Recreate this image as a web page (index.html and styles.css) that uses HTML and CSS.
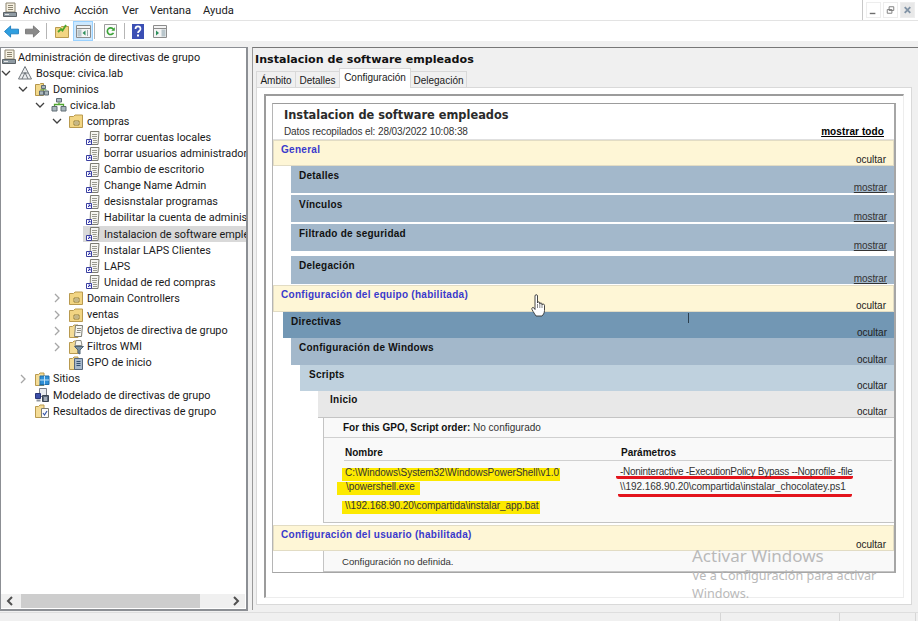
FILE: index.html
```html
<!DOCTYPE html>
<html lang="es">
<head>
    <meta charset="UTF-8">
    <title>Administración de directivas de grupo</title>
    <link rel="stylesheet" href="styles.css">
</head>
<body>

<svg class="defs" width="0" height="0">
    <symbol id="i-root" viewBox="0 0 16 16">
        <path d="M4 1h9v9H4z" fill="#f6f1e2" stroke="#8d8672"/>
        <path d="M6 3.500h5M6 5.500h5M6 7.500h5" stroke="#8d8672"/>
        <path d="M1.500 10.500h13v4h-13z" fill="#8f9ba3" stroke="#5b6267"/>
        <path d="M3 12.500h4" stroke="#e8e8e8"/>
    </symbol>
    <symbol id="i-forest" viewBox="0 0 16 16">
        <path d="M8 1.500l6.500 12.500h-13z" fill="#eceef0" stroke="#70767c"/>
        <path d="M8 7.500l-3 6.500M8 7.500l3 6.500M5 8h6" stroke="#70767c" fill="none"/>
    </symbol>
    <symbol id="i-domains" viewBox="0 0 16 16">
        <path d="M1.500 14.500v-11h4l1-1h3v12z" fill="#f3d98b" stroke="#b5964b"/>
        <path d="M7.500 4.500h4v3h-4zM5.500 10h4v4h-4zM10.500 10h4v4h-4z" fill="#a9b6bc" stroke="#5f6d75"/>
        <path d="M6.500 8.800h6" stroke="#5a9d45"/>
    </symbol>
    <symbol id="i-domain" viewBox="0 0 16 16">
        <path d="M5.500 1.500h5v3.500h-5zM1 9.500h5v4.500h-5zM10 9.500h5v4.500h-5z" fill="#a9b6bc" stroke="#5f6d75"/>
        <path d="M8 5.500v2.500M3.500 9V7.500h9V9" fill="none" stroke="#4fa52f" stroke-width="1.300"/>
    </symbol>
    <symbol id="i-ou" viewBox="0 0 16 16">
        <path d="M1.500 14.500v-11h4l1.500-1.500h7.500v12.500z" fill="#f2d583" stroke="#b99a4f"/>
        <path d="M6 8h5v4h-5z" fill="#fbf2cf" stroke="#8f7a3a"/>
        <path d="M7 10h3" stroke="#8f7a3a"/>
    </symbol>
    <symbol id="i-gpo" viewBox="0 0 16 16">
        <path d="M5.500 1.500h8.500l-1 13h-8z" fill="#f6f6f2" stroke="#7c7c72"/>
        <path d="M7 4.500h5M7 6.500h5M7.500 8.500h4M8 10.500h4M8 12.500h4" stroke="#9a9a90"/>
        <path d="M1.500 9.500h5v5h-5z" fill="#fff" stroke="#3a3f9f"/>
        <path d="M3 13l2-2M3.500 11H5v1.500" fill="none" stroke="#2428b0"/>
    </symbol>
    <symbol id="i-gpofolder" viewBox="0 0 16 16">
        <path d="M1.500 14.500v-11h3l1.500-1.500h4v12.500z" fill="#f4dc97" stroke="#b99a4f"/>
        <path d="M7.500 2.500h7l-1 11h-7z" fill="#f7f7f3" stroke="#7c7c72"/>
        <path d="M9 5.500h4M9 7.500h4M8.500 9.500h4" stroke="#8f8f86"/>
    </symbol>
    <symbol id="i-filter" viewBox="0 0 16 16">
        <path d="M1.500 14.500v-11h3l1.500-1.500h4v12.500z" fill="#f4dc97" stroke="#b99a4f"/>
        <path d="M8 1.500h5l1 5h-7z" fill="#f7f7f3" stroke="#8d8d84"/>
        <path d="M6.500 7.500h9l-3.500 3.500v4l-2-1v-3z" fill="#7d94a6" stroke="#4e6273"/>
    </symbol>
    <symbol id="i-starter" viewBox="0 0 16 16">
        <path d="M1.500 14.500v-11h3l1.500-1.500h4v12.500z" fill="#f4dc97" stroke="#b99a4f"/>
        <path d="M6.500 3.500h8v11h-8z" fill="#a8b9cc" stroke="#56677c"/>
        <path d="M8.500 6.500h4M8.500 8.500h4M8.500 10.500h4" stroke="#34506e"/>
    </symbol>
    <symbol id="i-sites" viewBox="0 0 16 16">
        <path d="M1.500 14.500v-11h3l1.500-1.500h4v12.500z" fill="#f4dc97" stroke="#b99a4f"/>
        <path d="M6 5h9v8.500H6z" fill="#2f8fd6" stroke="#1f6da8"/>
        <path d="M10.500 5v8.500M6 9h9" stroke="#bfe2f7"/>
        <path d="M5 14h5" stroke="#1f6da8"/>
    </symbol>
    <symbol id="i-model" viewBox="0 0 16 16">
        <path d="M5.500 1.500h7v8h-7z" fill="#e9ecf0" stroke="#7a7f88"/>
        <path d="M1.500 6.500h5v5h-5z" fill="#3c4fa8" stroke="#2a3578"/>
        <path d="M8.500 8.500h6v6h-6z" fill="#5d6a7c" stroke="#3a4452"/>
        <path d="M2.500 12.500h4v2h-4z" fill="#8e949c"/>
        <path d="M10 11h3M10 13h3" stroke="#e9ecf0"/>
    </symbol>
    <symbol id="i-results" viewBox="0 0 16 16">
        <path d="M1.500 14.500v-11h3l1.500-1.500h4v12.500z" fill="#f4dc97" stroke="#b99a4f"/>
        <path d="M7.500 5.500h7v9h-7z" fill="#fbfbfb" stroke="#7c7c72"/>
        <path d="M9 10l1.500 2 2.500-4" fill="none" stroke="#3a58a8" stroke-width="1.200"/>
    </symbol>
    <symbol id="i-open" viewBox="0 0 10 10">
        <path d="M1 3l4 4 4-4" fill="none" stroke="#404040" stroke-width="1.300"/>
    </symbol>
    <symbol id="i-closed" viewBox="0 0 10 10">
        <path d="M3 1l4 4-4 4" fill="none" stroke="#a6a6a6" stroke-width="1.300"/>
    </symbol>
</svg>

<header class="menubar">
    <svg class="app-icon"><use href="#i-root"/></svg>
    <nav class="menu">
        <span class="menu-item archivo">Archivo</span>
        <span class="menu-item accion">Acción</span>
        <span class="menu-item ver">Ver</span>
        <span class="menu-item ventana">Ventana</span>
        <span class="menu-item">Ayuda</span>
    </nav>
    <div class="winbtns">
        <span class="winbtn">
            <svg width="14" height="14" viewBox="0 0 14 14"><path d="M3 10h6v1.500H3z" fill="#6d6d6d"/></svg>
        </span>
        <span class="winbtn">
            <svg width="14" height="14" viewBox="0 0 14 14"><path d="M5.500 3.500h5v4h-5zM3.500 6.500h5v4h-5z" fill="#fff" stroke="#7a7a7a"/></svg>
        </span>
        <span class="winbtn close">
            <svg width="14" height="14" viewBox="0 0 14 14"><path d="M4 4l6 6M10 4l-6 6" stroke="#8193a5" stroke-width="2"/></svg>
        </span>
    </div>
</header>

<div class="toolbar">
    <svg class="tool arrow" viewBox="0 0 16 14"><path d="M0.500 7L7 1v3.500h8.500v5H7V13z" fill="#2f9fe0" stroke="#1e7fc0"/></svg>
    <svg class="tool arrow" viewBox="0 0 16 14"><path d="M15.500 7L9 1v3.500H0.500v5H9V13z" fill="#8a8a8a" stroke="#777"/></svg>
    <i class="tool-sep"></i>
    <svg class="tool up" viewBox="0 0 14 14"><path d="M0.500 13.500v-10h5l1-1h7v11z" fill="#f2d583" stroke="#b99a4f"/><path d="M3 8l3-3 1.500 1.500L11 1" fill="none" stroke="#4ba52f" stroke-width="1.800"/></svg>
    <span class="tool-active">
        <svg width="15" height="13" viewBox="0 0 15 13"><path d="M0.500 0.500h14v12h-14z" fill="#f4f4f4" stroke="#8c8c8c"/><path d="M0.500 3.500h14" stroke="#8c8c8c"/><path d="M1.500 4.500h4v7h-4z" fill="#b9c6cc"/><path d="M9.500 5.500L6.500 8l3 2.500z" fill="#2d8f5b"/><path d="M11.500 5v6" stroke="#9aa"/></svg>
    </span>
    <i class="tool-sep"></i>
    <svg class="tool refresh" viewBox="0 0 13 14"><path d="M0.500 0.500h12v13h-12z" fill="#fafafa" stroke="#9c9c9c"/><path d="M9.300 5.200a3.300 3.300 0 1 0 .2 3.600" fill="none" stroke="#3aa236" stroke-width="1.600"/><path d="M10.800 3.200v3.600H7.300z" fill="#3aa236"/></svg>
    <i class="tool-sep"></i>
    <svg class="tool help" viewBox="0 0 12 15"><path d="M0 0h12v15H0z" fill="#3b4fb4"/><path d="M3.500 5c0-3.500 5-3.500 5 0 0 2-2.500 2-2.500 4" fill="none" stroke="#fff" stroke-width="1.700"/><path d="M5 10.500h2v2H5z" fill="#fff"/></svg>
    <svg class="tool panel" viewBox="0 0 14 13"><path d="M0.500 0.500h13v12h-13z" fill="#f4f4f4" stroke="#8c8c8c"/><path d="M0.500 3.500h13" stroke="#8c8c8c"/><path d="M3 5.500L6 8l-3 2.500z" fill="#2d8f5b"/><path d="M8.500 4.500h4v7h-4z" fill="#b9c6cc"/></svg>
</div>

<main class="workspace">
    <aside class="tree">
        <ul class="tree-list">
            <li class="node lv0"><svg class="ico"><use href="#i-root"/></svg><span>Administración de directivas de grupo</span></li>
            <li class="node lv1"><svg class="chev"><use href="#i-open"/></svg><svg class="ico"><use href="#i-forest"/></svg><span>Bosque: civica.lab</span></li>
            <li class="node lv2"><svg class="chev"><use href="#i-open"/></svg><svg class="ico"><use href="#i-domains"/></svg><span>Dominios</span></li>
            <li class="node lv3"><svg class="chev"><use href="#i-open"/></svg><svg class="ico"><use href="#i-domain"/></svg><span>civica.lab</span></li>
            <li class="node lv4"><svg class="chev"><use href="#i-open"/></svg><svg class="ico"><use href="#i-ou"/></svg><span>compras</span></li>
            <li class="node lv5"><svg class="ico"><use href="#i-gpo"/></svg><span>borrar cuentas locales</span></li>
            <li class="node lv5"><svg class="ico"><use href="#i-gpo"/></svg><span>borrar usuarios administradores</span></li>
            <li class="node lv5"><svg class="ico"><use href="#i-gpo"/></svg><span>Cambio de escritorio</span></li>
            <li class="node lv5"><svg class="ico"><use href="#i-gpo"/></svg><span>Change Name Admin</span></li>
            <li class="node lv5"><svg class="ico"><use href="#i-gpo"/></svg><span>desisnstalar programas</span></li>
            <li class="node lv5"><svg class="ico"><use href="#i-gpo"/></svg><span>Habilitar la cuenta de administrador</span></li>
            <li class="node lv5 selected"><svg class="ico"><use href="#i-gpo"/></svg><span>Instalacion de software empleados</span></li>
            <li class="node lv5"><svg class="ico"><use href="#i-gpo"/></svg><span>Instalar LAPS Clientes</span></li>
            <li class="node lv5"><svg class="ico"><use href="#i-gpo"/></svg><span>LAPS</span></li>
            <li class="node lv5"><svg class="ico"><use href="#i-gpo"/></svg><span>Unidad de red compras</span></li>
            <li class="node lv4"><svg class="chev"><use href="#i-closed"/></svg><svg class="ico"><use href="#i-ou"/></svg><span>Domain Controllers</span></li>
            <li class="node lv4"><svg class="chev"><use href="#i-closed"/></svg><svg class="ico"><use href="#i-ou"/></svg><span>ventas</span></li>
            <li class="node lv4"><svg class="chev"><use href="#i-closed"/></svg><svg class="ico"><use href="#i-gpofolder"/></svg><span>Objetos de directiva de grupo</span></li>
            <li class="node lv4"><svg class="chev"><use href="#i-closed"/></svg><svg class="ico"><use href="#i-filter"/></svg><span>Filtros WMI</span></li>
            <li class="node lv5 starter"><svg class="ico"><use href="#i-starter"/></svg><span>GPO de inicio</span></li>
            <li class="node lv2"><svg class="chev"><use href="#i-closed"/></svg><svg class="ico"><use href="#i-sites"/></svg><span>Sitios</span></li>
            <li class="node lv2 no-chev"><svg class="ico"><use href="#i-model"/></svg><span>Modelado de directivas de grupo</span></li>
            <li class="node lv2 no-chev"><svg class="ico"><use href="#i-results"/></svg><span>Resultados de directivas de grupo</span></li>
        </ul>
        <div class="hscroll">
            <svg width="14" height="14" viewBox="0 0 14 14"><path d="M9 3L5 7l4 4" fill="none" stroke="#505050" stroke-width="2"/></svg>
            <div class="hscroll-track"><div class="hscroll-thumb"></div></div>
            <svg width="14" height="14" viewBox="0 0 14 14"><path d="M5 3l4 4-4 4" fill="none" stroke="#505050" stroke-width="2"/></svg>
        </div>
    </aside>

    <section class="pane">
        <h1 class="pane-title">Instalacion de software empleados</h1>
        <div class="tabs">
            <span class="tab tab-ambito">Ámbito</span>
            <span class="tab tab-detalles">Detalles</span>
            <span class="tab active">Configuración</span>
            <span class="tab tab-delegacion">Delegación</span>
        </div>
        <div class="tab-page">
            <div class="frame">
                <div class="report">
                    <div class="report-head">
                        <h2>Instalacion de software empleados</h2>
                        <div class="report-meta">
                            <span>Datos recopilados el: 28/03/2022 10:08:38</span>
                            <a class="show-all">mostrar todo</a>
                        </div>
                    </div>

                    <div class="bar cream h26"><span class="title">General</span><span class="toggle">ocultar</span></div>
                    <div class="bar steel ind18 gap2"><b>Detalles</b><a class="toggle">mostrar</a></div>
                    <div class="bar steel ind18 gap2"><b>Vínculos</b><a class="toggle">mostrar</a></div>
                    <div class="bar steel ind18 gap5"><b>Filtrado de seguridad</b><a class="toggle">mostrar</a></div>
                    <div class="bar steel ind18 h28 gap1"><b>Delegación</b><a class="toggle">mostrar</a></div>

                    <div class="bar cream"><span class="title">Configuración del equipo (habilitada)</span><span class="toggle">ocultar</span></div>
                    <div class="bar deep ind10 h26"><b>Directivas</b><span class="toggle">ocultar</span></div>
                    <div class="bar steel ind18"><b>Configuración de Windows</b><span class="toggle">ocultar</span></div>
                    <div class="bar pale ind27 h26"><b>Scripts</b><span class="toggle">ocultar</span></div>
                    <div class="bar grey ind45"><b class="inicio">Inicio</b><span class="toggle">ocultar</span></div>

                    <div class="detail scripts">
                        <div class="order"><b>For this GPO, Script order:</b> No configurado</div>
                        <div class="script-table">
                            <b class="th">Nombre</b>
                            <b class="th">Parámetros</b>
                            <div class="cell">
                                <mark class="hl first">C:\Windows\System32\WindowsPowerShell\v1.0</mark>
                                <mark class="hl hl-wrap">\powershell.exe</mark>
                            </div>
                            <div class="cell params">
                                <span class="redline">-Noninteractive -ExecutionPolicy Bypass --Noprofile -file</span>
                                <span class="redline second">\\192.168.90.20\compartida\instalar_chocolatey.ps1</span>
                            </div>
                            <div class="cell"><mark class="hl">\\192.168.90.20\compartida\instalar_app.bat</mark></div>
                            <div class="cell"></div>
                        </div>
                    </div>

                    <div class="bar cream top2 h26"><span class="title">Configuración del usuario (habilitada)</span><span class="toggle">ocultar</span></div>
                    <div class="detail undefined">Configuración no definida.</div>
                </div>
            </div>
        </div>
    </section>
</main>

<footer class="statusbar">
    <i class="status-cell first"></i>
    <i class="status-cell second"></i>
    <i class="status-cell"></i>
</footer>

<i class="caret"></i>
<svg class="hand" width="15" height="23" viewBox="0 0 15 23">
    <path d="M4 2c0-1.800 2.500-1.800 2.500 0v7c0-1.500 2.300-1.500 2.300 0v1c0-1.400 2.200-1.400 2.200 0v1c0-1.200 2.500-1.200 2.500.3v5.200c0 2.500-1.500 4.500-2.500 5.500H5c-1-1.800-2.500-3.500-4-6.500-.7-1.800 1-2.700 2-1.500l1 1.500z" fill="#fff" stroke="#333" stroke-width="0.900"/>
    <path d="M6.500 10v4M8.800 10v4M11 11v3" stroke="#555" stroke-width="0.700"/>
</svg>

<div class="activation">
    <div class="activation-title">Activar Windows</div>
    <div class="activation-text">Ve a Configuración para activar<br>Windows.</div>
</div>

</body>
</html>
```

FILE: styles.css
```css
* {
    box-sizing: border-box;
}
html, body {
    margin: 0;
    height: 100%;
}
body {
    position: relative;
    width: 918px;
    height: 621px;
    overflow: hidden;
    background: #f0f0f0;
    color: #1a1a1a;
    font-family: Roboto, sans-serif;
    font-size: 10.85px;
}
.defs {
    position: absolute;
}

/* menu + toolbar */
.menubar {
    display: flex;
    align-items: center;
    height: 21px;
    background: #fff;
    border-bottom: 1px solid #e3e3e3;
    padding-left: 2px;
}
.app-icon {
    width: 16px;
    height: 16px;
}
.menu {
    display: flex;
    margin-left: 5px;
    padding-top: 1px;
    font-size: 11.2px;
}
.menu-item {
    color: #222;
}
.archivo { width: 51px; }
.accion { width: 48px; }
.ver { width: 28px; }
.ventana { width: 53px; }
.winbtns {
    display: flex;
    gap: 2px;
    height: 20px;
    margin-left: auto;
    padding: 2px 3px 0 3px;
    border-left: 1px solid #c8c8c8;
}
.winbtn {
    display: flex;
    align-items: center;
    justify-content: center;
    width: 15px;
    height: 16px;
    border: 1px solid #ededed;
}
.winbtn.close {
    background: #e8e8e8;
}
.toolbar {
    display: flex;
    align-items: center;
    height: 20px;
    background: #fff;
    padding-left: 4px;
}
.tool {
    display: block;
}
.arrow {
    width: 15px;
    height: 13px;
    margin-right: 6px;
}
.tool-sep {
    width: 1px;
    height: 16px;
    margin: 0 5px 0 0;
    background: #b5b5b5;
}
.up {
    width: 14px;
    height: 14px;
    margin: 0 4px 0 3px;
}
.tool-active {
    display: flex;
    align-items: center;
    justify-content: center;
    width: 20px;
    height: 20px;
    margin-right: 1px;
    background: #cce8ff;
    border: 1px solid #99d1ff;
}
.refresh {
    width: 13px;
    height: 14px;
    margin: 0 7px 0 4px;
}
.help {
    width: 12px;
    height: 15px;
    margin: 0 9px 0 2px;
}
.panel {
    width: 14px;
    height: 13px;
}

/* main area */
.workspace {
    display: flex;
    height: 564px;
    margin-top: 6px;
}
.tree {
    display: flex;
    flex-direction: column;
    flex: 0 0 248px;
    width: 248px;
    min-width: 0;
    border: 1px solid #8c8f94;
    border-width: 1px 2px 2px 1px;
    background: #fff;
}
.tree-list {
    flex: 1;
    list-style: none;
    margin: 0;
    padding: 1px 0 0;
    overflow: hidden;
}
.node {
    display: flex;
    align-items: center;
    height: 16.1px;
    white-space: nowrap;
    overflow: hidden;
}
.node span {
    padding-left: 3px;
}
.ico {
    flex: none;
    width: 16px;
    height: 16px;
}
.chev {
    flex: none;
    width: 10px;
    height: 10px;
    margin-right: 6px;
}
.lv0 span { padding-left: 1px; }
.lv1 { padding-left: 0; }
.lv2 { padding-left: 17px; }
.lv3 { padding-left: 34px; }
.lv4 { padding-left: 51px; }
.lv5 { padding-left: 84px; }
.lv2.no-chev { padding-left: 33px; }
.lv5.starter { padding-left: 67px; }
.node.selected {
    background: #d9d9d9;
    margin-left: 82px;
    padding-left: 2px;
}
.hscroll {
    display: flex;
    align-items: center;
    height: 14px;
    margin: 0 1px 1px 0;
    background: #f0f0f0;
}
.hscroll svg {
    flex: none;
    margin: 0 2px;
}
.hscroll-track {
    flex: 1;
    height: 14px;
}
.hscroll-thumb {
    width: 179px;
    height: 14px;
    margin-left: 2px;
    background: #cdcdcd;
}

.pane {
    display: flex;
    flex-direction: column;
    flex: 1;
    min-width: 0;
    height: 563px;
    margin-left: 4px;
    padding-left: 2px;
    border-top: 1px solid #777;
    border-left: 1px solid #999;
}
.pane-title {
    margin: 0;
    height: 22px;
    font-family: "DejaVu Sans", sans-serif;
    font-size: 11.1px;
    line-height: 24px;
    color: #111;
}
.tabs {
    display: flex;
    height: 17px;
    padding-left: 1px;
    font-family: "Liberation Sans", sans-serif;
    font-size: 10px;
}
.tab {
    height: 17px;
    line-height: 17px;
    margin-top: 1px;
    text-align: center;
    background: #f0f0f0;
    border: 1px solid #d9d9d9;
    border-bottom: none;
    margin-right: -1px;
}
.tab-ambito { width: 40px; }
.tab-detalles { width: 45px; }
.tab.active {
    position: relative;
    width: 72px;
    height: 20px;
    margin-top: -2px;
    background: #fff;
    z-index: 1;
}
.tab-delegacion { width: 57px; }

.tab-page {
    width: 656px;
    height: 518px;
    margin-left: 1px;
    padding: 6px 7px 8px;
    background: #fff;
    border: 1px solid #d9d9d9;
}
.frame {
    height: 504px;
    padding: 7px 8px 0 6px;
    border-top: 2px solid #9c9c9c;
    border-left: 2px solid #9c9c9c;
    border-right: 1px solid #ededed;
    border-bottom: 1px solid #ededed;
}
.report {
    width: 624px;
    border-top: 1px solid #9c9c9c;
    border-left: 1px solid #b5b5b5;
    border-right: 2px solid #a6a6a6;
    border-bottom: 1px solid #a6a6a6;
    font-family: "Liberation Sans", sans-serif;
    font-size: 10px;
}
.report-head {
    height: 36px;
    padding: 3px 10px 0 11px;
    border-bottom: 1px solid #e0e0e0;
}
.report-head h2 {
    margin: 0;
    height: 17px;
    font-family: "DejaVu Sans", sans-serif;
    font-size: 11.4px;
    line-height: 17px;
    color: #2b2b2b;
}
.report-meta {
    display: flex;
    justify-content: space-between;
    align-items: center;
    height: 14px;
    color: #333;
    letter-spacing: -0.1px;
}
.show-all {
    font-weight: bold;
    color: #000;
    letter-spacing: 0.1px;
    text-decoration: underline;
}

/* section bars */
.bar {
    display: flex;
    justify-content: space-between;
    height: 27px;
    padding: 3px 7px 0 8px;
    line-height: 14px;
    color: #111;
    overflow: hidden;
}
.bar b {
    white-space: nowrap;
    letter-spacing: 0.25px;
}
.toggle {
    align-self: flex-end;
    line-height: 12px;
    margin-bottom: -1px;
    color: #222;
}
a.toggle {
    text-decoration: underline;
    color: #333;
    letter-spacing: -0.1px;
}
.cream {
    background: #fef6d6;
    border: 1px solid #e2dcc4;
    padding-top: 2px;
    padding-left: 7px;
}
.cream .title {
    color: #3a3acc;
    font-weight: bold;
    letter-spacing: 0.28px;
}
.steel { background: #a3b8cb; }
.deep { background: #7297b4; }
.pale { background: #bfd1de; }
.grey { background: #e8e8e8; border-bottom: 1px solid #c4c4c4; }
.h26 { height: 26px; }
.h28 { height: 28px; }
.ind10 { margin-left: 10px; }
.ind18 { margin-left: 18px; }
.ind27 { margin-left: 27px; padding-left: 9px; }
.ind45 { margin-left: 45px; padding-left: 12px; }
.gap1 { margin-bottom: 1px; }
.gap2 { margin-bottom: 2px; }
.gap5 { margin-bottom: 5px; }
.top2 { margin-top: 2px; }
.inicio { margin-top: -1px; }

/* detail blocks */
.detail {
    margin-left: 50px;
    background: #f9f9f9;
    border-left: 1px solid #c4c4c4;
    border-bottom: 1px solid #c4c4c4;
}
.scripts {
    height: 105px;
}
.order {
    height: 20px;
    padding-left: 19px;
    line-height: 20px;
    border-bottom: 1px solid #d0d0d0;
    color: #333;
}
.order b {
    color: #111;
}
.script-table {
    display: grid;
    grid-template-columns: 276px 272px;
    grid-template-rows: 23px 40px 18px;
    margin-left: 20px;
}
.th {
    padding: 8px 0 0 1px;
    line-height: 14px;
    border-bottom: 1px solid #d0d0d0;
    color: #111;
}
.cell {
    display: flex;
    flex-direction: column;
    align-items: flex-start;
    padding-left: 1px;
    color: #333;
}
.cell.params {
    padding-left: 0;
}
.hl {
    height: 13px;
    line-height: 10px;
    margin-left: -3px;
    padding: 0 1px 0 3px;
    background: #fce900;
    color: #333;
    letter-spacing: -0.05px;
    white-space: nowrap;
}
.hl.first {
    margin-top: 7px;
    line-height: 9px;
}
.hl-wrap {
    width: 83px;
    margin-top: 1px;
    margin-left: -8px;
    padding: 0 0 0 9px;
}
.redline {
    display: block;
    width: 237px;
    height: 18px;
    margin-left: -4px;
    padding-left: 4px;
    border-bottom: 3px solid #e3141c;
    border-radius: 2px;
    line-height: 22px;
    letter-spacing: -0.27px;
    white-space: nowrap;
}
.redline.second {
    width: 234px;
    margin-left: -2px;
    padding-left: 2px;
    line-height: 16px;
    letter-spacing: -0.05px;
}
.undefined {
    height: 21px;
    padding-left: 18px;
    line-height: 21px;
    font-size: 9.6px;
    color: #333;
}

/* status bar */
.statusbar {
    display: flex;
    height: 9px;
    margin-top: 1px;
    border-top: 1px solid #dedede;
}
.status-cell {
    border-right: 1px solid #d6d6d6;
}
.status-cell.first { width: 721px; }
.status-cell.second { width: 119px; }
.status-cell:last-child { width: 76px; }

/* things lying over the report */
.caret {
    position: absolute;
    left: 688px;
    top: 313px;
    width: 1px;
    height: 10px;
    background: #2c3e4d;
}
.hand {
    position: absolute;
    left: 531px;
    top: 294px;
}
.activation {
    position: absolute;
    left: 692px;
    top: 546px;
    color: #b9b9b9;
    font-family: "Noto Sans", sans-serif;
}
.activation-title {
    font-size: 17px;
    line-height: 20px;
}
.activation-text {
    margin-top: 1px;
    font-size: 12.6px;
    line-height: 18px;
}
```
